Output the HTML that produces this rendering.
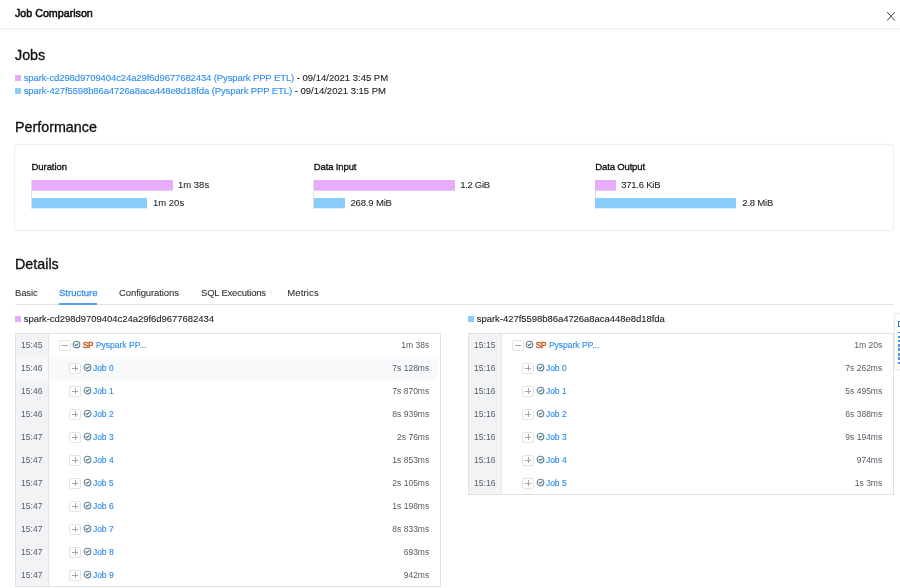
<!DOCTYPE html>
<html><head><meta charset="utf-8">
<style>
*{box-sizing:border-box;margin:0;padding:0}
html,body{width:900px;height:588px;overflow:hidden;background:#fff}
body{font-family:"Liberation Sans",sans-serif;color:#222;position:relative;font-size:9.5px}
.abs{position:absolute;white-space:nowrap}
a{color:#2b8cee;text-decoration:none}
.hdr{left:0;top:28px;width:900px;height:2px;background:#f4f4f4}
.title{left:15px;top:6.7px;font-size:10.7px;color:#111;-webkit-text-stroke:0.55px #111;letter-spacing:0.0px}
h2{position:absolute;left:15px;font-size:14.3px;font-weight:normal;color:#111;white-space:nowrap;-webkit-text-stroke:0.32px #111}
.sq{position:absolute;width:6px;height:6px}
.pink{background:#e6acfb}.blue{background:#8bcdfa}
.bar::after{content:"";position:absolute;left:0;right:0;top:100%;height:1px;background:inherit;opacity:.65}
.bar.blue::after{opacity:.3}
.line{left:23.7px;font-size:9.5px;color:#222;-webkit-text-stroke:0.1px #222}
.line a{letter-spacing:-0.11px;-webkit-text-stroke:0.1px #2b8cee}
.perf{left:14px;top:144px;width:880px;height:87px;border:1px solid #efefef;border-radius:3px;box-shadow:0 0 2px rgba(0,0,0,0.035)}
.axis{width:1px;height:30px;top:179px;background:#e0e0e0}
.lbl{font-size:9.5px;color:#111;-webkit-text-stroke:0.32px #111}
.bar{position:absolute;height:10px}
.val{font-size:9.5px;color:#2a2a2a;-webkit-text-stroke:0.1px #2a2a2a}
.tab{top:287px;font-size:9.5px;color:#333;-webkit-text-stroke:0.1px #333}
.tabline{left:15px;top:304px;width:879px;height:1px;background:#e4e4e4}
.tabact{left:59px;top:303px;width:38px;height:2px;background:#559df5}
.tbl{position:absolute;overflow:hidden;border:1px solid #dfe1e4}
.row{position:absolute;left:0;height:23px;width:calc(100% - 2px)}
.row .t{position:absolute;left:0;top:0;width:33px;height:23px;background:#f2f3f5;border-right:1px solid #e4e6e9;font-size:8.5px;color:#565d66;line-height:23px;text-align:center;padding-right:0.5px}
.row.alt{background:#f8f9fb}
.row.alt .t{background:#f7f8fa}
.btn{position:absolute;top:5.8px;margin-left:-0.2px;width:11.4px;height:11.4px;border:1px solid #e4e4e4;border-radius:2px;background:#fff}
.btn i{position:absolute;left:1.7px;top:4.2px;width:6px;height:1px;background:#a6a6a6}
.btn b{position:absolute;left:4.2px;top:1.7px;width:1px;height:6px;background:#a6a6a6}
.ico{position:absolute;top:6.15px;width:9px;height:9px}
.nm{position:absolute;top:0;line-height:23px;font-size:8.5px;color:#2b8cee;-webkit-text-stroke:0.12px #2b8cee;white-space:nowrap}
.sp{position:absolute;top:0;line-height:23px;font-size:8.2px;letter-spacing:-0.35px;-webkit-text-stroke:0.45px #cc5522;color:#cc5522;white-space:nowrap}
.d{position:absolute;right:8.8px;top:0;line-height:23px;font-size:8.5px;color:#565d66;white-space:nowrap}
.side{left:894.1px;top:313px;width:12px;height:57px;background:#fff;border:1px solid #e9e9e9;border-radius:3px;box-shadow:0 0 2px rgba(0,0,0,0.06)}
.side b{position:absolute;left:2.6px;top:7px;width:6px;height:5.5px;border:1.3px solid #1f78dc}
.side i{position:absolute;left:3.3px;width:4px;background:#4a92e6}
#wrap{position:absolute;left:0;top:0;width:900px;height:588px;overflow:hidden;will-change:transform}
</style></head><body><div id="wrap">
<div class="abs hdr"></div>
<div class="abs title">Job Comparison</div>
<svg class="abs" style="left:886.2px;top:11.4px" width="10" height="10.6" viewBox="0 0 10 10.6"><path d="M1.2 1.1L8.8 9.5M8.8 1.1L1.2 9.5" stroke="#2c3444" stroke-width="0.95" fill="none"/></svg>

<h2 style="top:46.5px">Jobs</h2>
<div class="sq pink" style="left:15px;top:75px"></div>
<div class="abs line" style="top:72px"><a>spark-cd298d9709404c24a29f6d9677682434 (Pyspark PPP ETL)</a> - 09/14/2021 3:45 PM</div>
<div class="sq blue" style="left:15px;top:88px"></div>
<div class="abs line" style="top:85px"><a>spark-427f5598b86a4726a8aca448e8d18fda (Pyspark PPP ETL)</a> - 09/14/2021 3:15 PM</div>

<h2 style="top:119px">Performance</h2>
<div class="abs perf"></div>
<div class="abs axis" style="left:31px"></div><div class="abs axis" style="left:313px"></div><div class="abs axis" style="left:594.5px"></div>
<div class="abs lbl" style="left:31.6px;top:161px;letter-spacing:-0.08px">Duration</div>
<div class="bar pink" style="left:32px;top:180px;width:141px"></div>
<div class="abs val" style="left:178px;top:179px">1m 38s</div>
<div class="bar blue" style="left:32px;top:198px;width:115.4px"></div>
<div class="abs val" style="left:153px;top:197px">1m 20s</div>

<div class="abs lbl" style="left:313.8px;top:161px;letter-spacing:-0.13px">Data Input</div>
<div class="bar pink" style="left:314px;top:180px;width:141px"></div>
<div class="abs val" style="left:460.3px;top:179px;letter-spacing:-0.33px">1.2 GiB</div>
<div class="bar blue" style="left:314px;top:198px;width:30.8px"></div>
<div class="abs val" style="left:350.5px;top:197px;letter-spacing:-0.17px">268.9 MiB</div>

<div class="abs lbl" style="left:595.3px;top:161px;letter-spacing:-0.15px">Data Output</div>
<div class="bar pink" style="left:595.3px;top:180px;width:20.3px"></div>
<div class="abs val" style="left:621.2px;top:179px;letter-spacing:-0.24px">371.6 KiB</div>
<div class="bar blue" style="left:595.3px;top:198px;width:141px"></div>
<div class="abs val" style="left:742.3px;top:197px;letter-spacing:-0.2px">2.8 MiB</div>

<h2 style="top:256px">Details</h2>
<div class="abs tab" style="left:15px;letter-spacing:-0.15px">Basic</div>
<div class="abs tab" style="left:59px;color:#2b8cee;-webkit-text-stroke:0.25px #2b8cee">Structure</div>
<div class="abs tab" style="left:119px;letter-spacing:-0.1px">Configurations</div>
<div class="abs tab" style="left:201px;letter-spacing:-0.21px">SQL Executions</div>
<div class="abs tab" style="left:287.3px;letter-spacing:0.12px">Metrics</div>
<div class="abs tabline"></div>
<div class="abs tabact"></div>

<div class="sq pink" style="left:15px;top:316px"></div>
<div class="abs line" style="top:313px;letter-spacing:-0.04px">spark-cd298d9709404c24a29f6d9677682434</div>
<div class="sq blue" style="left:468px;top:316px"></div>
<div class="abs line" style="left:476.8px;top:313px;letter-spacing:-0.045px">spark-427f5598b86a4726a8aca448e8d18fda</div>

<div class="abs side"><b></b><i style="top:17.5px;height:1.0px"></i><i style="top:21.5px;height:2.4px"></i><i style="top:25.8px;height:2.4px"></i><i style="top:30.0px;height:2.8px"></i><i style="top:34.3px;height:2.8px"></i><i style="top:38.8px;height:2.8px"></i><i style="top:43.4px;height:2.8px"></i><i style="top:48.0px;height:2.4px"></i></div>
<div class="tbl" id="t1" style="left:15px;top:333px;width:426px;height:254px">
<div class="row" style="top:0px"><div class="t">15:45</div><div class="btn" style="left:43.5px"><i></i></div><svg class="ico" style="left:56.4px" viewBox="0 0 9 9"><circle cx="4.5" cy="4.5" r="3.3" fill="none" stroke="#5f8494" stroke-width="1.15"/><path d="M2.8 4.4L3.9 5.6L6.3 3.5" fill="none" stroke="#5f8494" stroke-width="1.25"/></svg><span class="sp" style="left:66.8px">SP</span><span class="nm" style="left:79.9px">Pyspark PP...</span><span class="d">1m 38s</span></div>
<div class="row alt" style="top:23px"><div class="t">15:46</div><div class="btn" style="left:53.5px"><i></i><b></b></div><svg class="ico" style="left:66.7px" viewBox="0 0 9 9"><circle cx="4.5" cy="4.5" r="3.3" fill="none" stroke="#5f8494" stroke-width="1.15"/><path d="M2.8 4.4L3.9 5.6L6.3 3.5" fill="none" stroke="#5f8494" stroke-width="1.25"/></svg><span class="nm" style="left:76.9px">Job 0</span><span class="d">7s 128ms</span></div>
<div class="row" style="top:46px"><div class="t">15:46</div><div class="btn" style="left:53.5px"><i></i><b></b></div><svg class="ico" style="left:66.7px" viewBox="0 0 9 9"><circle cx="4.5" cy="4.5" r="3.3" fill="none" stroke="#5f8494" stroke-width="1.15"/><path d="M2.8 4.4L3.9 5.6L6.3 3.5" fill="none" stroke="#5f8494" stroke-width="1.25"/></svg><span class="nm" style="left:76.9px">Job 1</span><span class="d">7s 870ms</span></div>
<div class="row" style="top:69px"><div class="t">15:46</div><div class="btn" style="left:53.5px"><i></i><b></b></div><svg class="ico" style="left:66.7px" viewBox="0 0 9 9"><circle cx="4.5" cy="4.5" r="3.3" fill="none" stroke="#5f8494" stroke-width="1.15"/><path d="M2.8 4.4L3.9 5.6L6.3 3.5" fill="none" stroke="#5f8494" stroke-width="1.25"/></svg><span class="nm" style="left:76.9px">Job 2</span><span class="d">8s 939ms</span></div>
<div class="row" style="top:92px"><div class="t">15:47</div><div class="btn" style="left:53.5px"><i></i><b></b></div><svg class="ico" style="left:66.7px" viewBox="0 0 9 9"><circle cx="4.5" cy="4.5" r="3.3" fill="none" stroke="#5f8494" stroke-width="1.15"/><path d="M2.8 4.4L3.9 5.6L6.3 3.5" fill="none" stroke="#5f8494" stroke-width="1.25"/></svg><span class="nm" style="left:76.9px">Job 3</span><span class="d">2s 76ms</span></div>
<div class="row" style="top:115px"><div class="t">15:47</div><div class="btn" style="left:53.5px"><i></i><b></b></div><svg class="ico" style="left:66.7px" viewBox="0 0 9 9"><circle cx="4.5" cy="4.5" r="3.3" fill="none" stroke="#5f8494" stroke-width="1.15"/><path d="M2.8 4.4L3.9 5.6L6.3 3.5" fill="none" stroke="#5f8494" stroke-width="1.25"/></svg><span class="nm" style="left:76.9px">Job 4</span><span class="d">1s 853ms</span></div>
<div class="row" style="top:138px"><div class="t">15:47</div><div class="btn" style="left:53.5px"><i></i><b></b></div><svg class="ico" style="left:66.7px" viewBox="0 0 9 9"><circle cx="4.5" cy="4.5" r="3.3" fill="none" stroke="#5f8494" stroke-width="1.15"/><path d="M2.8 4.4L3.9 5.6L6.3 3.5" fill="none" stroke="#5f8494" stroke-width="1.25"/></svg><span class="nm" style="left:76.9px">Job 5</span><span class="d">2s 105ms</span></div>
<div class="row" style="top:161px"><div class="t">15:47</div><div class="btn" style="left:53.5px"><i></i><b></b></div><svg class="ico" style="left:66.7px" viewBox="0 0 9 9"><circle cx="4.5" cy="4.5" r="3.3" fill="none" stroke="#5f8494" stroke-width="1.15"/><path d="M2.8 4.4L3.9 5.6L6.3 3.5" fill="none" stroke="#5f8494" stroke-width="1.25"/></svg><span class="nm" style="left:76.9px">Job 6</span><span class="d">1s 198ms</span></div>
<div class="row" style="top:184px"><div class="t">15:47</div><div class="btn" style="left:53.5px"><i></i><b></b></div><svg class="ico" style="left:66.7px" viewBox="0 0 9 9"><circle cx="4.5" cy="4.5" r="3.3" fill="none" stroke="#5f8494" stroke-width="1.15"/><path d="M2.8 4.4L3.9 5.6L6.3 3.5" fill="none" stroke="#5f8494" stroke-width="1.25"/></svg><span class="nm" style="left:76.9px">Job 7</span><span class="d">8s 833ms</span></div>
<div class="row" style="top:207px"><div class="t">15:47</div><div class="btn" style="left:53.5px"><i></i><b></b></div><svg class="ico" style="left:66.7px" viewBox="0 0 9 9"><circle cx="4.5" cy="4.5" r="3.3" fill="none" stroke="#5f8494" stroke-width="1.15"/><path d="M2.8 4.4L3.9 5.6L6.3 3.5" fill="none" stroke="#5f8494" stroke-width="1.25"/></svg><span class="nm" style="left:76.9px">Job 8</span><span class="d">693ms</span></div>
<div class="row" style="top:230px"><div class="t">15:47</div><div class="btn" style="left:53.5px"><i></i><b></b></div><svg class="ico" style="left:66.7px" viewBox="0 0 9 9"><circle cx="4.5" cy="4.5" r="3.3" fill="none" stroke="#5f8494" stroke-width="1.15"/><path d="M2.8 4.4L3.9 5.6L6.3 3.5" fill="none" stroke="#5f8494" stroke-width="1.25"/></svg><span class="nm" style="left:76.9px">Job 9</span><span class="d">942ms</span></div>
</div>
<div class="tbl" id="t2" style="left:468px;top:333px;width:426px;height:162px">
<div class="row" style="top:0px"><div class="t">15:15</div><div class="btn" style="left:43.5px"><i></i></div><svg class="ico" style="left:56.4px" viewBox="0 0 9 9"><circle cx="4.5" cy="4.5" r="3.3" fill="none" stroke="#5f8494" stroke-width="1.15"/><path d="M2.8 4.4L3.9 5.6L6.3 3.5" fill="none" stroke="#5f8494" stroke-width="1.25"/></svg><span class="sp" style="left:66.8px">SP</span><span class="nm" style="left:79.9px">Pyspark PP...</span><span class="d">1m 20s</span></div>
<div class="row" style="top:23px"><div class="t">15:16</div><div class="btn" style="left:53.5px"><i></i><b></b></div><svg class="ico" style="left:66.7px" viewBox="0 0 9 9"><circle cx="4.5" cy="4.5" r="3.3" fill="none" stroke="#5f8494" stroke-width="1.15"/><path d="M2.8 4.4L3.9 5.6L6.3 3.5" fill="none" stroke="#5f8494" stroke-width="1.25"/></svg><span class="nm" style="left:76.9px">Job 0</span><span class="d">7s 262ms</span></div>
<div class="row" style="top:46px"><div class="t">15:16</div><div class="btn" style="left:53.5px"><i></i><b></b></div><svg class="ico" style="left:66.7px" viewBox="0 0 9 9"><circle cx="4.5" cy="4.5" r="3.3" fill="none" stroke="#5f8494" stroke-width="1.15"/><path d="M2.8 4.4L3.9 5.6L6.3 3.5" fill="none" stroke="#5f8494" stroke-width="1.25"/></svg><span class="nm" style="left:76.9px">Job 1</span><span class="d">5s 495ms</span></div>
<div class="row" style="top:69px"><div class="t">15:16</div><div class="btn" style="left:53.5px"><i></i><b></b></div><svg class="ico" style="left:66.7px" viewBox="0 0 9 9"><circle cx="4.5" cy="4.5" r="3.3" fill="none" stroke="#5f8494" stroke-width="1.15"/><path d="M2.8 4.4L3.9 5.6L6.3 3.5" fill="none" stroke="#5f8494" stroke-width="1.25"/></svg><span class="nm" style="left:76.9px">Job 2</span><span class="d">6s 388ms</span></div>
<div class="row" style="top:92px"><div class="t">15:16</div><div class="btn" style="left:53.5px"><i></i><b></b></div><svg class="ico" style="left:66.7px" viewBox="0 0 9 9"><circle cx="4.5" cy="4.5" r="3.3" fill="none" stroke="#5f8494" stroke-width="1.15"/><path d="M2.8 4.4L3.9 5.6L6.3 3.5" fill="none" stroke="#5f8494" stroke-width="1.25"/></svg><span class="nm" style="left:76.9px">Job 3</span><span class="d">9s 194ms</span></div>
<div class="row" style="top:115px"><div class="t">15:16</div><div class="btn" style="left:53.5px"><i></i><b></b></div><svg class="ico" style="left:66.7px" viewBox="0 0 9 9"><circle cx="4.5" cy="4.5" r="3.3" fill="none" stroke="#5f8494" stroke-width="1.15"/><path d="M2.8 4.4L3.9 5.6L6.3 3.5" fill="none" stroke="#5f8494" stroke-width="1.25"/></svg><span class="nm" style="left:76.9px">Job 4</span><span class="d">974ms</span></div>
<div class="row" style="top:138px"><div class="t">15:16</div><div class="btn" style="left:53.5px"><i></i><b></b></div><svg class="ico" style="left:66.7px" viewBox="0 0 9 9"><circle cx="4.5" cy="4.5" r="3.3" fill="none" stroke="#5f8494" stroke-width="1.15"/><path d="M2.8 4.4L3.9 5.6L6.3 3.5" fill="none" stroke="#5f8494" stroke-width="1.25"/></svg><span class="nm" style="left:76.9px">Job 5</span><span class="d">1s 3ms</span></div>
</div>

</div></body></html>
